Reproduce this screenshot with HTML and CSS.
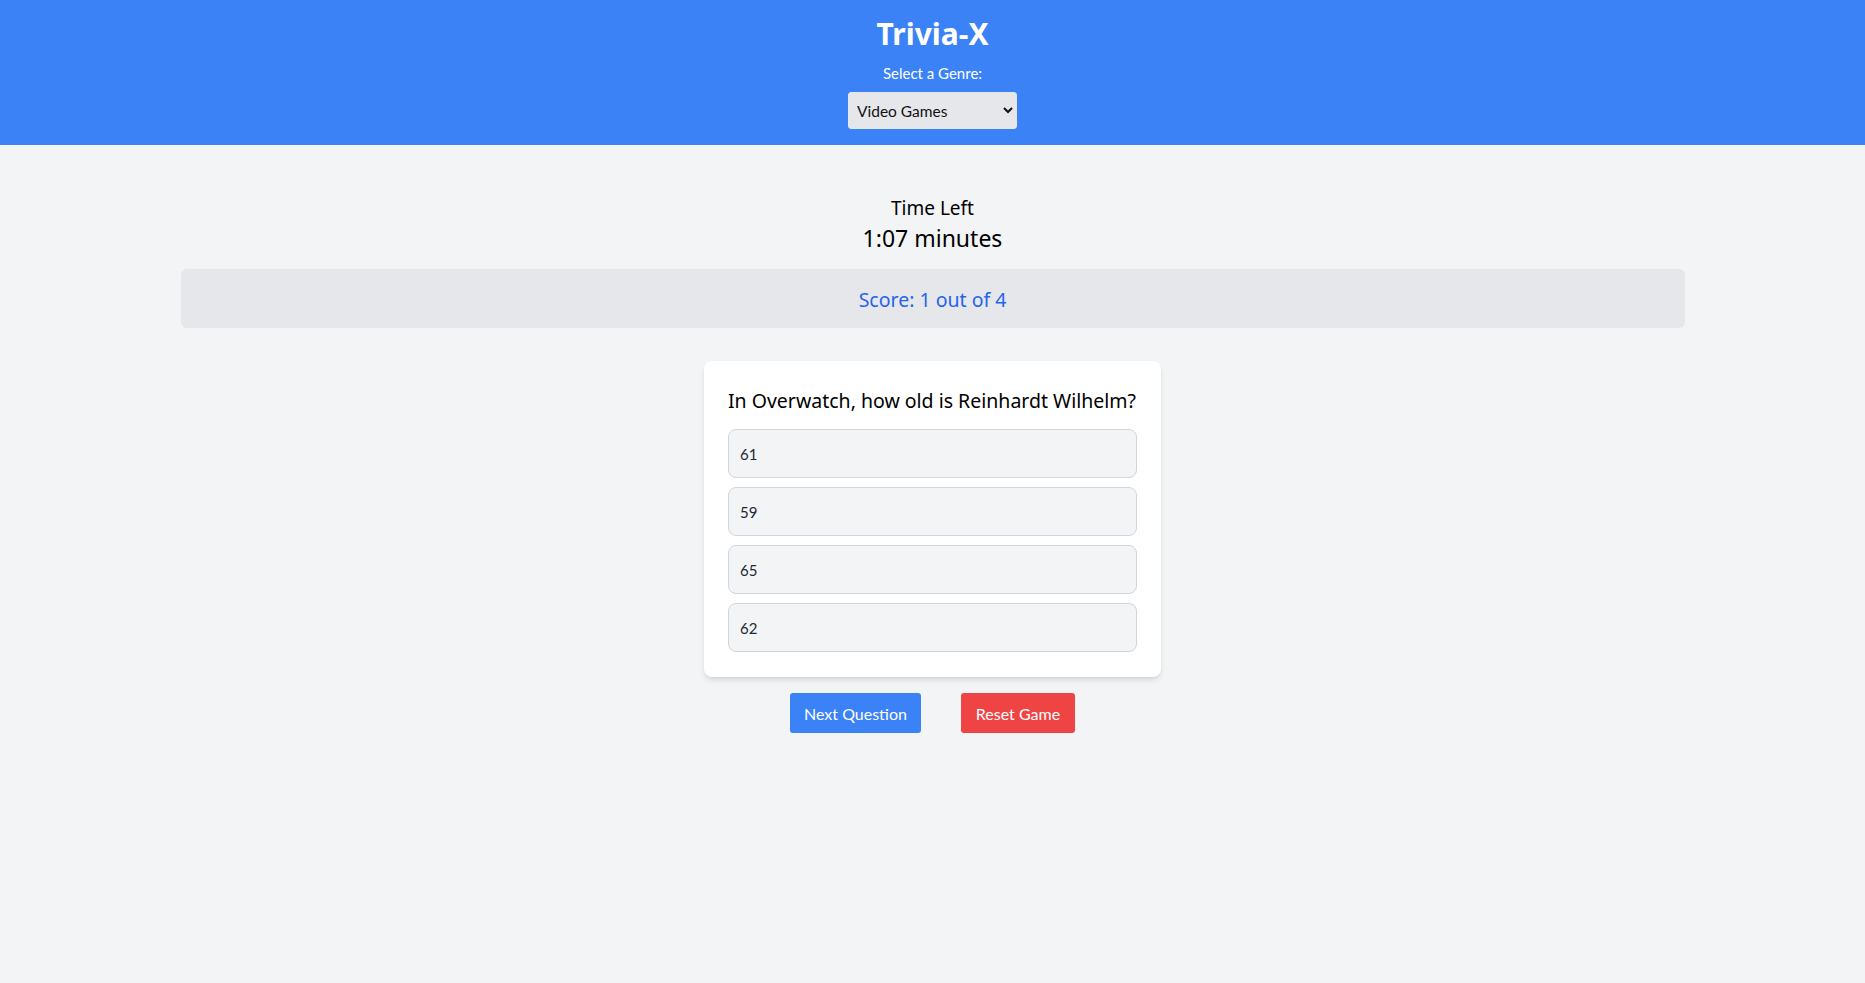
FILE: index.html
```html
<!DOCTYPE html>
<html lang="en">
<head>
<meta charset="utf-8">
<title>Trivia-X</title>
<link rel="stylesheet" href="styles.css">
</head>
<body>
<header class="header">
  <h1 class="title">Trivia-X</h1>
  <label class="genre-label" for="genre">Select a Genre:</label>
  <select id="genre" class="genre-select">
    <option>Video Games</option>
  </select>
</header>
<main class="main">
  <div class="timer">
    <div class="timer-label">Time Left</div>
    <div class="timer-value">1:07 minutes</div>
  </div>
  <div class="score">Score: 1 out of 4</div>
  <div class="card">
    <h2 class="question">In Overwatch, how old is Reinhardt Wilhelm?</h2>
    <div class="options">
      <button class="option">61</button>
      <button class="option">59</button>
      <button class="option">65</button>
      <button class="option">62</button>
    </div>
  </div>
  <div class="actions">
    <button class="btn btn-next">Next Question</button>
    <button class="btn btn-reset">Reset Game</button>
  </div>
</main>
</body>
</html>
```
FILE: styles.css
```css
* { box-sizing: border-box; }
html, body { margin: 0; padding: 0; }
body {
  background: #f3f4f6;
  font-family: "Noto Sans", "Open Sans", sans-serif;
  color: #000;
  min-height: 983px;
}
.header {
  background: #3b82f6;
  color: #fff;
  display: flex;
  flex-direction: column;
  align-items: center;
  padding: 16px 0 16px;
  height: 145px;
}
.title {
  margin: 0;
  font-size: 30px;
  line-height: 36px;
  font-weight: 700;
  font-family: "Noto Sans", sans-serif;
}
.genre-label {
  margin-top: 11px;
  font-family: "Lato", sans-serif;
  font-weight: 400;
  font-size: 15px;
  line-height: 20px;
}
.genre-select {
  margin-top: 9px;
  width: 169px;
  height: 37px;
  background: #e5e7eb;
  border: 1px solid #e5e7eb;
  border-radius: 3px;
  font-family: "Lato", sans-serif;
  font-weight: 400;
  font-size: 15.5px;
  color: #111;
  padding: 0 4px;
}
.main {
  max-width: 1536px;
  margin: 0 auto;
  padding: 50px 16px 0;
  display: flex;
  flex-direction: column;
  align-items: center;
}
.timer { text-align: center; }
.timer-label { font-size: 19px; line-height: 27px; }
.timer-value { font-size: 23px; line-height: 32px; }
.score {
  align-self: stretch;
  margin-top: 15px;
  background: #e5e7eb;
  border-radius: 6px;
  height: 59px;
  display: flex;
  align-items: center;
  justify-content: center;
  color: #2563eb;
  font-size: 19.5px;
  padding-top: 2px;
}
.card {
  margin-top: 33px;
  width: 457px;
  background: #fff;
  border-radius: 8px;
  padding: 24px 24px 25px;
  box-shadow: 0 4px 6px -1px rgba(0,0,0,0.1), 0 2px 4px -2px rgba(0,0,0,0.1);
}
.question {
  margin: 0;
  font-size: 19.5px;
  font-weight: 400;
  line-height: 28px;
  white-space: nowrap;
  padding-top: 2px;
}
.options {
  margin-top: 14px;
  display: flex;
  flex-direction: column;
  gap: 9px;
}
.option {
  height: 49px;
  width: 100%;
  text-align: left;
  background: #f3f4f6;
  border: 1px solid #d1d5db;
  border-radius: 8px;
  padding: 0 11px;
  font-family: "Lato", sans-serif;
  font-weight: 400;
  font-size: 15px;
  color: #1f2937;
}
.actions {
  margin-top: 16px;
  display: flex;
  gap: 40px;
}
.btn {
  height: 40px;
  border: none;
  border-radius: 3px;
  color: #fff;
  font-family: "Lato", sans-serif;
  font-weight: 400;
  font-size: 16px;
  padding: 1px 0 0;
  white-space: nowrap;
}
.btn-next { background: #3b82f6; width: 131px; }
.btn-reset { background: #ef4444; width: 114px; }
```
